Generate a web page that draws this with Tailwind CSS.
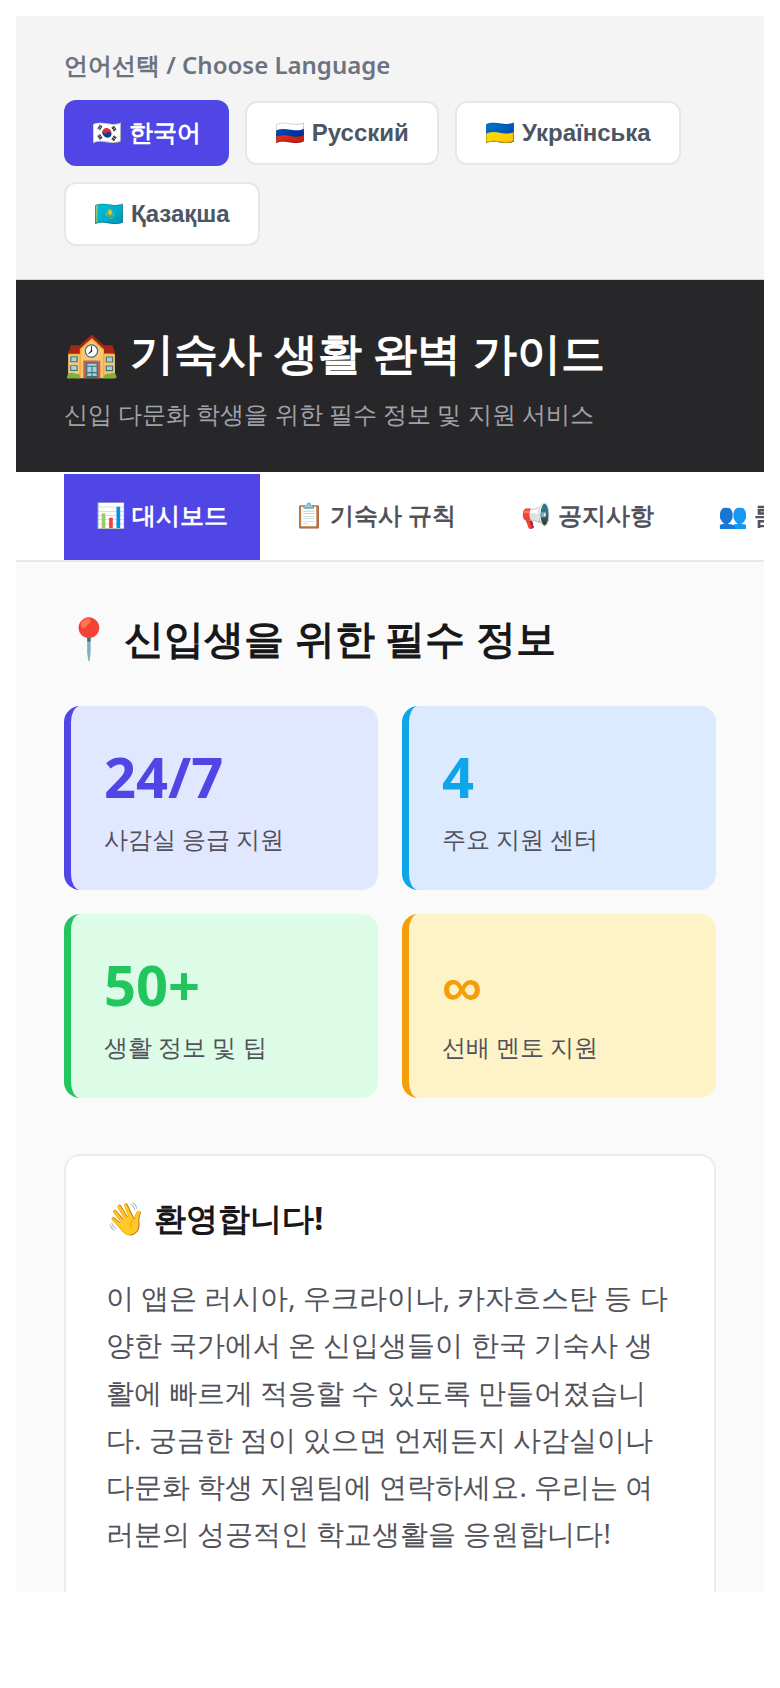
<!DOCTYPE html>
<html lang="ko">
<head>
    <meta charset="UTF-8">
    <meta name="viewport" content="width=device-width, initial-scale=1.0">
    <title>기숙사 생활 완벽 가이드</title>
    <script src="https://cdn.jsdelivr.net/npm/@tailwindcss/browser@4"></script>
</head>
<body class="bg-white font-['Noto_Sans',sans-serif]">
    <div class="m-4 h-[1576px] overflow-hidden bg-[#fafafa]">
        <!-- language picker -->
        <div class="bg-[#f4f4f5] border-b border-[#d4d4d8] pt-[32px] px-12 h-[264px]">
            <p class="text-[#6b7280] text-[24px] leading-[34px] font-semibold mb-[18px]">언어선택 / Choose Language</p>
            <div class="flex flex-wrap gap-x-4 gap-y-4">
                <button class="h-[66px] w-[165px] rounded-[12px] bg-[#4f46e5] text-white text-[24px] font-semibold font-['Liberation_Sans',sans-serif]">🇰🇷 한국어</button>
                <button class="h-[64px] w-[194px] mt-[1px] rounded-[12px] bg-white border-2 border-[#e5e7eb] text-[#4b5563] text-[24px] font-bold font-['Liberation_Sans',sans-serif]">🇷🇺 Русский</button>
                <button class="h-[64px] w-[226px] mt-[1px] rounded-[12px] bg-white border-2 border-[#e5e7eb] text-[#4b5563] text-[24px] font-bold font-['Liberation_Sans',sans-serif]">🇺🇦 Українська</button>
                <button class="h-[64px] w-[196px] rounded-[12px] bg-white border-2 border-[#e5e7eb] text-[#4b5563] text-[24px] font-bold font-['Liberation_Sans',sans-serif]">🇰🇿 Қазақша</button>
            </div>
        </div>

        <!-- header -->
        <div class="bg-[#27272a] h-[192px] px-12 pt-[39px]">
            <h1 class="text-white text-[44px] leading-[66px] font-bold">🏫 기숙사 생활 완벽 가이드</h1>
            <p class="text-[#a1a1aa] text-[24px] leading-[34px] mt-[12px]">신입 다문화 학생을 위한 필수 정보 및 지원 서비스</p>
        </div>

        <!-- tabs -->
        <nav class="bg-white border-b-2 border-[#e5e7eb] h-[90px] pl-12 pt-[2px] flex gap-[1px] overflow-hidden whitespace-nowrap text-[24px] font-semibold text-[#52525b]">
            <a class="h-[86px] w-[196px] shrink-0 flex items-center justify-center bg-[#4f46e5] text-white pb-[4px]">📊 대시보드</a>
            <a class="h-[86px] pl-[33px] pr-[32px] shrink-0 flex items-center pb-[4px]">📋 기숙사 규칙</a>
            <a class="h-[86px] pl-[32px] pr-[31px] shrink-0 flex items-center pb-[4px]">📢 공지사항</a>
            <a class="h-[86px] px-[32px] shrink-0 flex items-center pb-[4px]">👥 룸메이트</a>
        </nav>

        <!-- content -->
        <main class="px-12 pt-[46px]">
            <h2 class="text-[#18181b] text-[40px] leading-[60px] font-bold mb-[38px]">📍 신입생을 위한 필수 정보</h2>

            <div class="grid grid-cols-2 gap-6">
                <div class="h-[184px] rounded-[16px] border-l-[7px] border-[#4f46e5] bg-[#e0e7ff] pl-[33px] pt-[32px]">
                    <div class="text-[#4f46e5] text-[56px] leading-[76px] font-bold">24/7</div>
                    <div class="text-[#52525b] text-[24px] leading-[34px] mt-[8px]">사감실 응급 지원</div>
                </div>
                <div class="h-[184px] rounded-[16px] border-l-[7px] border-[#0ea5e9] bg-[#dbeafe] pl-[33px] pt-[32px]">
                    <div class="text-[#0ea5e9] text-[56px] leading-[76px] font-bold">4</div>
                    <div class="text-[#52525b] text-[24px] leading-[34px] mt-[8px]">주요 지원 센터</div>
                </div>
                <div class="h-[184px] rounded-[16px] border-l-[7px] border-[#22c55e] bg-[#dcfce7] pl-[33px] pt-[32px]">
                    <div class="text-[#22c55e] text-[56px] leading-[76px] font-bold">50+</div>
                    <div class="text-[#52525b] text-[24px] leading-[34px] mt-[8px]">생활 정보 및 팁</div>
                </div>
                <div class="h-[184px] rounded-[16px] border-l-[7px] border-[#f59e0b] bg-[#fef3c7] pl-[33px] pt-[32px]">
                    <div class="text-[#f59e0b] text-[56px] leading-[76px] font-bold">∞</div>
                    <div class="text-[#52525b] text-[24px] leading-[34px] mt-[8px]">선배 멘토 지원</div>
                </div>
            </div>

            <section class="mt-[56px] h-[600px] rounded-[16px] bg-white border-2 border-[#ececec] px-[40px] pt-[38px]">
                <h3 class="text-[#18181b] text-[32px] leading-[48px] font-bold mb-[32px]">👋 환영합니다!</h3>
                <p class="text-[#52525b] text-[27.5px] leading-[47.3px]">이 앱은 러시아, 우크라이나, 카자흐스탄 등 다양한 국가에서 온 신입생들이 한국 기숙사 생활에 빠르게 적응할 수 있도록 만들어졌습니다. 궁금한 점이 있으면 언제든지 사감실이나 다문화 학생 지원팀에 연락하세요. 우리는 여러분의 성공적인 학교생활을 응원합니다!</p>
            </section>
        </main>
    </div>
</body>
</html>
